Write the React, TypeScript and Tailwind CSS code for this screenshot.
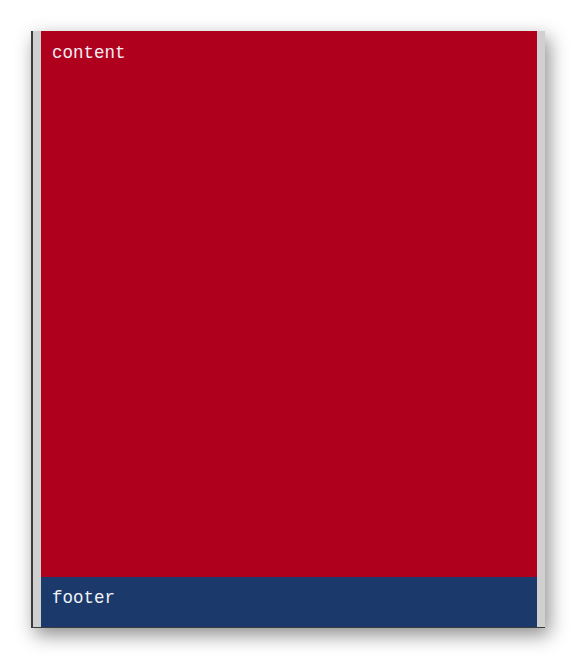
export default function App() {
  return (
    <div className="w-[577px] h-[660px] bg-white pl-[31px] pt-[31px]">
      <div className="w-[514px] h-[597px] flex flex-col bg-[#d0d0d0] border-l-2 border-b border-[#3c3c3c] shadow-[4px_7px_18px_rgba(0,0,0,0.45)] px-[8px]">
        <div className="flex-1 bg-[#af001e] px-[11px] pt-[11px] text-[17.5px] leading-[22px] text-[#f4eef4] font-['Liberation_Mono','Courier_New',monospace]">
          content
        </div>
        <div className="h-[50px] bg-[#1b3a6b] px-[11px] pt-[10px] text-[17.5px] leading-[22px] text-[#f0f2f6] font-['Liberation_Mono','Courier_New',monospace]">
          footer
        </div>
      </div>
    </div>
  );
}
